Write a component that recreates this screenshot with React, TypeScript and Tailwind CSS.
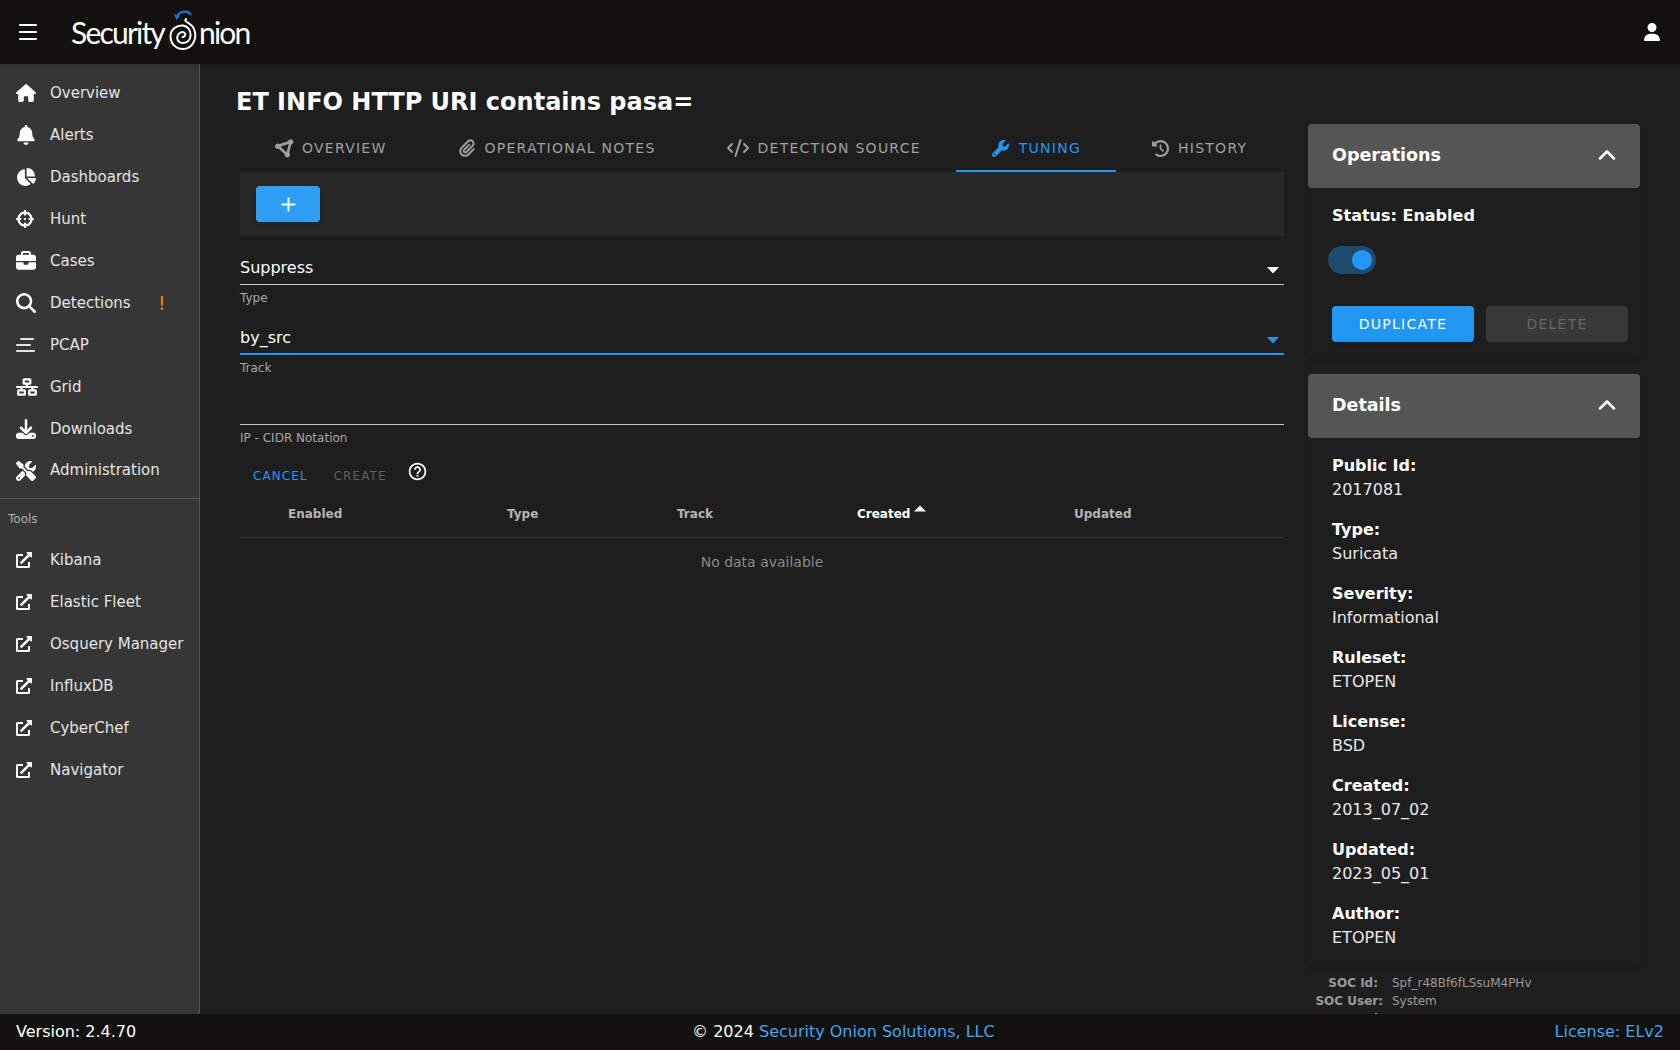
import React from 'react';
import {
  FaHouse, FaBell, FaChartPie, FaCrosshairs, FaBriefcase, FaMagnifyingGlass, FaNetworkWired,
  FaDownload, FaScrewdriverWrench, FaUser, FaPaperclip, FaWrench, FaClockRotateLeft,
} from 'react-icons/fa6';
import { FaExternalLinkAlt } from 'react-icons/fa';
import { MdOutlineHelpOutline } from 'react-icons/md';
import { Menu, ChevronUp, Plus, CodeXml } from 'lucide-react';

// triangle with round corners, the overview tab's icon
const TriangleIcon = ({ size = 18 }: { size?: number }) => (
  <svg width={size} height={size} viewBox="0 0 20 20" fill="none">
    <path d="M3 7.5L16.5 3L13 16.5z" stroke="currentColor" strokeWidth="2.8" />
    <circle cx="3" cy="7.5" r="2.8" fill="currentColor" />
    <circle cx="16.5" cy="3" r="2.8" fill="currentColor" />
    <circle cx="13" cy="16.5" r="2.8" fill="currentColor" />
  </svg>
);

const PcapIcon = ({ size = 20 }: { size?: number }) => (
  <svg width={size} height={size} viewBox="0 0 20 20" fill="none" stroke="currentColor" strokeWidth="2" strokeLinecap="round">
    <path d="M5 4h12" />
    <path d="M1 10h13" />
    <path d="M1 16h17" />
  </svg>
);

const mainNav = [
  { label: 'Overview', icon: FaHouse },
  { label: 'Alerts', icon: FaBell },
  { label: 'Dashboards', icon: FaChartPie },
  { label: 'Hunt', icon: FaCrosshairs, size: 18 },
  { label: 'Cases', icon: FaBriefcase },
  { label: 'Detections', icon: FaMagnifyingGlass },
  { label: 'PCAP', icon: PcapIcon },
  { label: 'Grid', icon: FaNetworkWired, size: 22 },
  { label: 'Downloads', icon: FaDownload },
  { label: 'Administration', icon: FaScrewdriverWrench, tight: true },
];

const tools = ['Kibana', 'Elastic Fleet', 'Osquery Manager', 'InfluxDB', 'CyberChef', 'Navigator'];

const tabs = [
  { label: 'Overview', icon: TriangleIcon, size: 19, cls: '' },
  { label: 'Operational Notes', icon: FaPaperclip, size: 18, cls: 'mx-[1px]' },
  { label: 'Detection Source', icon: CodeXml, size: 24, cls: '' },
  { label: 'Tuning', icon: FaWrench, size: 17, cls: 'mx-[1.5px]', active: true },
  { label: 'History', icon: FaClockRotateLeft, size: 17, cls: 'mx-[1px]' },
];

const details = [
  ['Public Id:', '2017081'],
  ['Type:', 'Suricata'],
  ['Severity:', 'Informational'],
  ['Ruleset:', 'ETOPEN'],
  ['License:', 'BSD'],
  ['Created:', '2013_07_02'],
  ['Updated:', '2023_05_01'],
  ['Author:', 'ETOPEN'],
];

const Logo = () => (
  <div className="flex items-center font-['Lato',sans-serif] text-[30px] text-white tracking-[-1.8px] h-16 ml-[31px]">
    <span>Security</span>
    <svg width="30" height="44" viewBox="0 0 30 44" fill="none" className="ml-[4px] mr-[1px]">
      <path d="M9 7C11 1 20 -0.5 23 5" stroke="#1976d2" strokeWidth="2.2" />
      <path d="M6 4L12 6L8.5 10z" fill="#1976d2" />
      <path
        d="M18 9C15 12 24 13 26 19C30 29 24 39 15 39C7 39 2.5 33 2.5 26C2.5 19 9 15 15 15.5C20 16 23 21 22.5 26C22 31 18 33 14 33C10.5 33 8.5 29 9.5 26C10.5 22.5 15 20.5 17 23.5C18 25.5 16 27 14.5 27"
        stroke="#fff"
        strokeWidth="2"
        strokeLinecap="round"
      />
    </svg>
    <span>nion</span>
  </div>
);

const NavItem = ({ icon: Icon, label, size = 20, alert, tight }: { icon: any; label: string; size?: number; alert?: boolean; tight?: boolean }) => (
  <div className="flex items-center h-[42px] pl-4 text-[15px] text-[#e4e4e4]">
    <div className="w-[34px] flex items-center">
      <Icon size={size} className="text-white" />
    </div>
    <span className={tight ? 'pb-[1px]' : 'pt-[1px]'}>{label}</span>
    {alert && <span className="ml-[27px] text-[20px] leading-none text-[#f57c00]">!</span>}
  </div>
);

const Field = ({ value, label, focused, caret = true }: { value?: string; label: string; focused?: boolean; caret?: boolean }) => (
  <div className="h-[70px]">
    <div className={`h-[48px] flex items-center justify-between text-[16px] text-white border-b ${focused ? 'pt-[15px] border-b-2 border-[#2196f3]' : 'pt-[14px] border-[#c8c8c8]'}`}>
      <span>{value}</span>
      {caret && (
        <svg width="14" height="8" viewBox="0 0 14 8" className={`mr-[4px] mt-[4px] ${focused ? 'text-[#2196f3]' : 'text-white'}`}>
          <path d="M1 1h12L7 7.5z" fill="currentColor" />
        </svg>
      )}
    </div>
    <div className="text-[12px] leading-[16px] pt-[5px] text-[#a8a8a8]">{label}</div>
  </div>
);

const PanelHeader = ({ title }: { title: string }) => (
  <div className="h-16 bg-[#555555] rounded-[4px] flex items-center justify-between pl-6 pr-[19px] text-[17.5px] font-bold text-white">
    <span className="pb-[2px]">{title}</span>
    <ChevronUp size={28} strokeWidth={2.2} className="mb-[3px]" />
  </div>
);

export default function App() {
  return (
    <div className="h-screen flex flex-col bg-[#1e1e1e] text-white font-['DejaVu_Sans',sans-serif] overflow-hidden">
      <header className="h-16 shrink-0 bg-[#12110d] flex items-center pl-4 pr-4 shadow-md z-10">
        <Menu size={24} strokeWidth={2.2} className="text-white" />
        <Logo />
        <FaUser size={18} className="ml-auto mr-[3px] text-white" />
      </header>

      <div className="flex-1 flex min-h-0">
        <aside className="w-[200px] shrink-0 bg-[#363636] border-r border-[#555555] pt-[8px]">
          {mainNav.map(item => (
            <NavItem key={item.label} icon={item.icon} label={item.label} size={item.size} tight={item.tight} alert={item.label === 'Detections'} />
          ))}
          <div className="mt-[6px] border-t border-[#555555]" />
          <div className="h-[40px] flex items-center pl-2 text-[12px] text-[#b0b0b0]">Tools</div>
          {tools.map(label => (
            <NavItem key={label} icon={FaExternalLinkAlt} label={label} size={16} />
          ))}
        </aside>

        <main className="flex-1 min-w-0 pl-9 overflow-hidden">
          <h1 className="text-[24px] leading-[32px] font-bold pt-[22px] h-[60px]">ET INFO HTTP URI contains pasa=</h1>
          <div className="flex gap-6 ml-1">
            <section className="w-[1044px] shrink-0">
              <div className="flex h-12 text-[14px] tracking-[1.25px] uppercase text-[#a0a0a0]">
                {tabs.map(tab => {
                  const Icon = tab.icon as any;
                  return (
                    <div
                      key={tab.label}
                      className={`flex items-center gap-[8px] px-[35px] pt-[2px] border-b-2 ${tab.active ? 'text-[#2196f3] border-[#2196f3]' : 'border-transparent'}`}
                    >
                      <Icon size={tab.size} className={tab.cls} />
                      <span>{tab.label}</span>
                    </div>
                  );
                })}
              </div>
              <div className="h-16 bg-[#282828] pl-4 pt-[14px]">
                <button className="w-16 h-9 bg-[#2f9ff5] rounded-[4px] shadow-md flex items-center justify-center">
                  <Plus size={21} strokeWidth={2.2} />
                </button>
              </div>
              <div className="pt-[1px]">
                <Field value="Suppress" label="Type" />
                <Field value="by_src" label="Track" focused />
                <Field label="IP - CIDR Notation" caret={false} />
              </div>
              <div className="flex items-start h-[36px] text-[12px] tracking-[1.07px] uppercase mt-[10px]">
                <span className="px-[13px] pt-[1px] leading-[36px] text-[#2196f3]">Cancel</span>
                <span className="px-[13px] pt-[1px] leading-[36px] text-[#5f5f5f]">Create</span>
                <MdOutlineHelpOutline size={21} className="ml-[7px] mt-[4px] text-white" />
              </div>
              <div className="flex items-center h-[45px] pb-[3px] border-b border-[#3a3a3a] text-[12px] font-bold text-[#b4b4b4] pl-12">
                <div className="w-[219px]">Enabled</div>
                <div className="w-[170px]">Type</div>
                <div className="w-[180px]">Track</div>
                <div className="w-[217px] flex items-center text-white">
                  Created
                  <svg width="18" height="18" viewBox="0 0 18 18" className="mt-[-9px] ml-[1px]">
                    <path d="M3 11.5L9 5.5l6 6z" fill="currentColor" />
                  </svg>
                </div>
                <div>Updated</div>
              </div>
              <div className="h-12 flex items-center justify-center text-[14px] text-[#8a8a8a]">No data available</div>
            </section>

            <section className="w-[332px] shrink-0">
              <div className="rounded-[4px] shadow-md h-[234px]">
                <PanelHeader title="Operations" />
                <div className="px-6 pt-[16px]">
                  <div className="font-bold text-[16px] leading-6">Status: Enabled</div>
                  <div className="mt-[18px] ml-[-4px] w-12 h-7 rounded-full bg-[#1f4b6f] flex items-center justify-end pr-1">
                    <div className="w-5 h-5 rounded-full bg-[#2196f3]" />
                  </div>
                  <div className="flex gap-3 mt-8 text-[14px] tracking-[1.25px]">
                    <button className="w-[142px] shrink-0 h-9 rounded-[4px] bg-[#2196f3] text-white shadow-md">DUPLICATE</button>
                    <button className="w-[142px] shrink-0 h-9 rounded-[4px] bg-[#383838] text-[#666666]">DELETE</button>
                  </div>
                </div>
              </div>
              <div className="mt-4 rounded-[4px] shadow-md h-[592px]">
                <PanelHeader title="Details" />
                <div className="px-6 pt-[16px]">
                  {details.map(([k, v]) => (
                    <div key={k} className="h-16 text-[16px] leading-[24px]">
                      <div className="font-bold">{k}</div>
                      <div className="text-[#e8e8e8]">{v}</div>
                    </div>
                  ))}
                </div>
              </div>
              <div className="mt-[8px] text-[12px] leading-[18px] text-[#9a9a9a]">
                <div className="flex">
                  <div className="w-[75px] pr-[5px] text-right font-bold">SOC Id:</div>
                  <div className="ml-[9px]">Spf_r48Bf6fLSsuM4PHv</div>
                </div>
                <div className="flex">
                  <div className="w-[75px] text-right font-bold">SOC User:</div>
                  <div className="ml-[9px]">System</div>
                </div>
                <div className="flex">
                  <div className="w-[75px] text-right font-bold">Created:</div>
                </div>
              </div>
            </section>
          </div>
        </main>
      </div>

      <footer className="h-9 shrink-0 bg-[#12110d] flex items-center justify-between px-4 text-[16px] z-10">
        <span>Version: 2.4.70</span>
        <span className="mr-[4px]">© 2024 <span className="text-[#42a5f5]">Security Onion Solutions, LLC</span></span>
        <span className="text-[#42a5f5]">License: ELv2</span>
      </footer>
    </div>
  );
}
